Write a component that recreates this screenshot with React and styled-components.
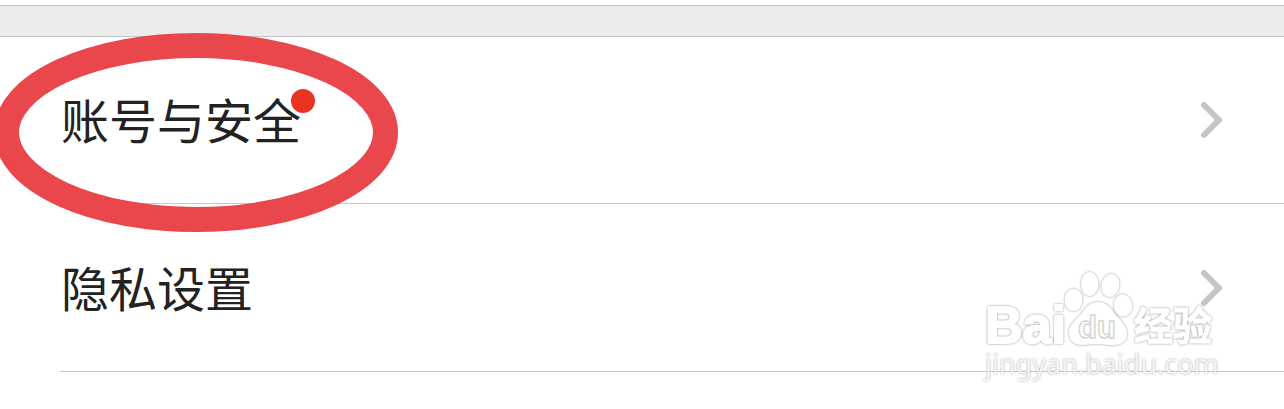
import styled, { createGlobalStyle } from 'styled-components';

const GlobalStyle = createGlobalStyle`
  * {
    box-sizing: border-box;
  }

  body {
    margin: 0;
    background: #fff;
    font-family: "Noto Sans CJK SC", "Noto Sans", sans-serif;
  }
`;

const Page = styled.main`
  min-height: 100vh;
  padding-top: 5px;
`;

const SectionGap = styled.div`
  height: 32px;
  background: #ececec;
  border-top: 1px solid #c4c4c8;
  border-bottom: 1px solid #c4c4c8;
`;

const SettingsList = styled.ul`
  margin: 0;
  padding: 0 0 0 60px;
  list-style: none;
`;

const SettingsItem = styled.li`
  position: relative;
  border-bottom: 1px solid #c6c6c8;
`;

const RowButton = styled.button`
  display: flex;
  align-items: center;
  justify-content: space-between;
  width: 100%;
  height: ${props => props.$height}px;
  padding: 0 60px 0 1px;
  border: none;
  background: none;
  color: #222;
  font-family: inherit;
  font-size: 48px;
  line-height: 72px;
  text-align: left;
  cursor: pointer;
`;

const Label = styled.span`
  position: relative;
  padding-bottom: 4px;
`;

const Badge = styled.span`
  position: absolute;
  top: 7px;
  right: -14px;
  width: 24px;
  height: 24px;
  border-radius: 50%;
  background: #e93323;
`;

const Highlight = styled.svg`
  position: absolute;
  top: -4px;
  left: -66px;
  pointer-events: none;
`;

const Watermark = styled.svg`
  position: absolute;
  top: 61px;
  right: 64px;
  pointer-events: none;
`;

const Glow = styled.g`
  filter: drop-shadow(0 0 1px #949494);
`;

const Chevron = () => (
    <svg width="26" height="40" viewBox="0 0 26 40" fill="none" aria-hidden="true">
        <path d="M6 5L21 20L6 35" stroke="#c5c5c7" strokeWidth="6" strokeLinecap="round" strokeLinejoin="round" />
    </svg>
);

const BaiduMark = () => (
    <Watermark width="240" height="122" viewBox="0 0 240 122">
        <Glow fill="#fff">
            <ellipse cx="93.5" cy="35" rx="9" ry="11.3" />
            <ellipse cx="109.7" cy="19" rx="8.8" ry="12" />
            <ellipse cx="130.3" cy="20.5" rx="9" ry="11.5" transform="rotate(14 130.3 20.5)" />
            <ellipse cx="143" cy="40.5" rx="9.2" ry="11" transform="rotate(-6 143 40.5)" />
            <path d="M118 37C108 37 105 44 101 49C96 55 89 59 89 68C89 76 94 80 102 80C108 80 112 79 118 79C125 79 129 81 136 80C144 79 148 74 147 67C146 59 139 54 135 49C131 43 127 37 118 37Z" />
        </Glow>
        <text
            x="98"
            y="73"
            fontSize="31"
            fontFamily='"Liberation Sans", Arial, sans-serif'
            fontWeight="bold"
            fill="#fff"
            stroke="#d4d4d4"
            strokeWidth="1.4"
        >
            du
        </text>
        <Glow
            fill="#fff"
            stroke="#fff"
            strokeWidth="2"
            strokeLinejoin="round"
            fontFamily='"Liberation Sans", Arial, sans-serif'
            fontWeight="bold"
        >
            <text x="5" y="78" fontSize="52">Bai</text>
            <text x="154" y="75" fontSize="39" strokeWidth="1" fontFamily='"Noto Sans CJK SC", sans-serif'>经验</text>
            <text
                x="5"
                y="109"
                fontSize="27"
                fontFamily='"Noto Sans", sans-serif'
                fontWeight="normal"
                fillOpacity="0.8"
                strokeWidth="0"
            >
                jingyan.baidu.com
            </text>
        </Glow>
    </Watermark>
);

const App = () => {
    return (
        <Page>
            <GlobalStyle />
            <SectionGap />
            <SettingsList>
                <SettingsItem>
                    <RowButton type="button" $height={166}>
                        <Label>
                            账号与安全
                            <Badge />
                        </Label>
                        <Chevron />
                    </RowButton>
                    <Highlight width="404" height="199" viewBox="0 0 404 199" aria-hidden="true">
                        <ellipse cx="202" cy="99.5" rx="189.5" ry="87" fill="none" stroke="#ea474c" strokeWidth="25" />
                    </Highlight>
                </SettingsItem>
                <SettingsItem>
                    <RowButton type="button" $height={167}>
                        <Label>隐私设置</Label>
                        <Chevron />
                    </RowButton>
                    <BaiduMark />
                </SettingsItem>
            </SettingsList>
        </Page>
    );
};

export default App;
